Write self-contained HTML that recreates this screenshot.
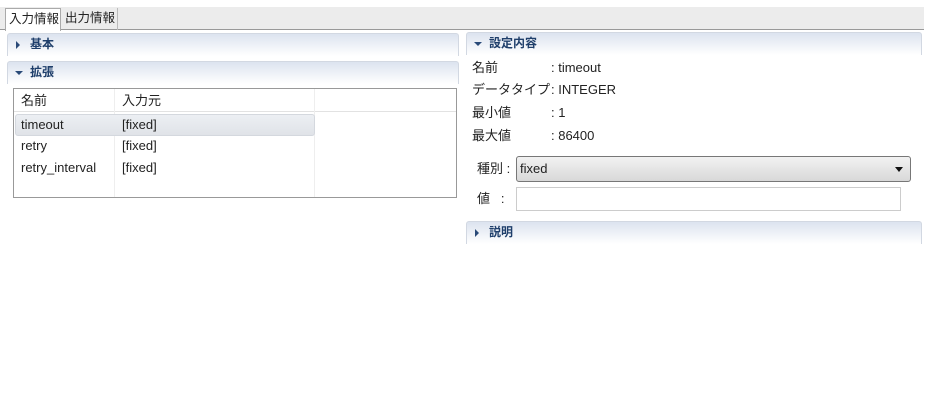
<!DOCTYPE html>
<html><head><meta charset="utf-8"><style>
*{margin:0;padding:0;box-sizing:border-box}
body{width:930px;height:410px;background:#fff;position:relative;font-family:"Liberation Sans","Noto Sans CJK JP",sans-serif;font-size:13px;color:#222;overflow:hidden}
.a{position:absolute;white-space:nowrap}
.bar{left:0;top:7px;width:924px;height:23px;background:#ececec;border-bottom:1px solid #999}
.tab{top:8px;height:22px;line-height:20px;padding:0 2px;font-size:12.5px;overflow:hidden}
.hd{border:1px solid #d2d8e2;border-bottom:none;border-radius:3px 3px 0 0;background:linear-gradient(#dce3ef,#fff);height:23px;font-weight:bold;color:#1f3f6b;line-height:21px;padding-left:22px;font-size:12px}
.tri{position:absolute;left:8px;top:7px;width:0;height:0}
.r{border-left:4px solid #2a4a78;border-top:4px solid transparent;border-bottom:4px solid transparent}
.d{top:9px;left:7px;border-top:4px solid #2a4a78;border-left:4px solid transparent;border-right:4px solid transparent}
.t{line-height:16px}
</style></head><body>
<div class="a bar"></div>
<div class="a tab" style="left:5px;width:56px;background:#fff;border:1px solid #aaa;border-bottom:none;height:23px;padding-left:3px">入力情報</div>
<div class="a tab" style="left:62px;width:56px;border-right:1px solid #bbb;padding-left:3px">出力情報</div>

<div class="a hd" style="left:7px;top:33px;width:452px"><span class="tri r"></span>基本</div>
<div class="a hd" style="left:7px;top:61px;width:452px"><span class="tri d"></span>拡張</div>

<div class="a" style="left:13px;top:88px;width:444px;height:110px;border:1px solid #999;background:#fff"></div>
<div class="a" style="left:14px;top:111px;width:442px;height:1px;background:#e2e2e2"></div>
<div class="a" style="left:114px;top:89px;width:1px;height:108px;background:#eee"></div>
<div class="a" style="left:314px;top:89px;width:1px;height:108px;background:#eee"></div>
<div class="a" style="left:15px;top:114px;width:300px;height:22px;background:linear-gradient(#eceff3,#e0e3e8);border:1px solid #d4d8de;border-radius:3px"></div>
<div class="a t" style="left:21px;top:93px">名前</div>
<div class="a t" style="left:122px;top:93px">入力元</div>
<div class="a t" style="left:21px;top:117px">timeout</div>
<div class="a t" style="left:122px;top:117px">[fixed]</div>
<div class="a t" style="left:21px;top:138px">retry</div>
<div class="a t" style="left:122px;top:138px">[fixed]</div>
<div class="a t" style="left:21px;top:160px">retry_interval</div>
<div class="a t" style="left:122px;top:160px">[fixed]</div>

<div class="a hd" style="left:466px;top:32px;width:456px"><span class="tri d"></span>設定内容</div>
<div class="a t" style="left:472px;top:60px">名前</div>
<div class="a t" style="left:551px;top:60px">:&nbsp;timeout</div>
<div class="a t" style="left:472px;top:82px">データタイプ</div>
<div class="a t" style="left:551px;top:82px">:&nbsp;INTEGER</div>
<div class="a t" style="left:472px;top:105px">最小値</div>
<div class="a t" style="left:551px;top:105px">:&nbsp;1</div>
<div class="a t" style="left:472px;top:128px">最大値</div>
<div class="a t" style="left:551px;top:128px">:&nbsp;86400</div>
<div class="a t" style="left:477px;top:161px">種別 :</div>
<div class="a" style="left:516px;top:156px;width:395px;height:26px;border:1px solid #777;border-radius:3px;background:linear-gradient(#f2f2f2,#d8d8d8);line-height:24px;padding-left:3px">fixed</div>
<div class="a" style="left:895px;top:167px;border-top:5px solid #111;border-left:4px solid transparent;border-right:4px solid transparent"></div>
<div class="a t" style="left:477px;top:191px">値&nbsp;&nbsp;&nbsp;:</div>
<div class="a" style="left:516px;top:187px;width:385px;height:24px;border:1px solid #ccc;background:#fff"></div>
<div class="a hd" style="left:466px;top:221px;width:456px"><span class="tri r"></span>説明</div>
</body></html>
